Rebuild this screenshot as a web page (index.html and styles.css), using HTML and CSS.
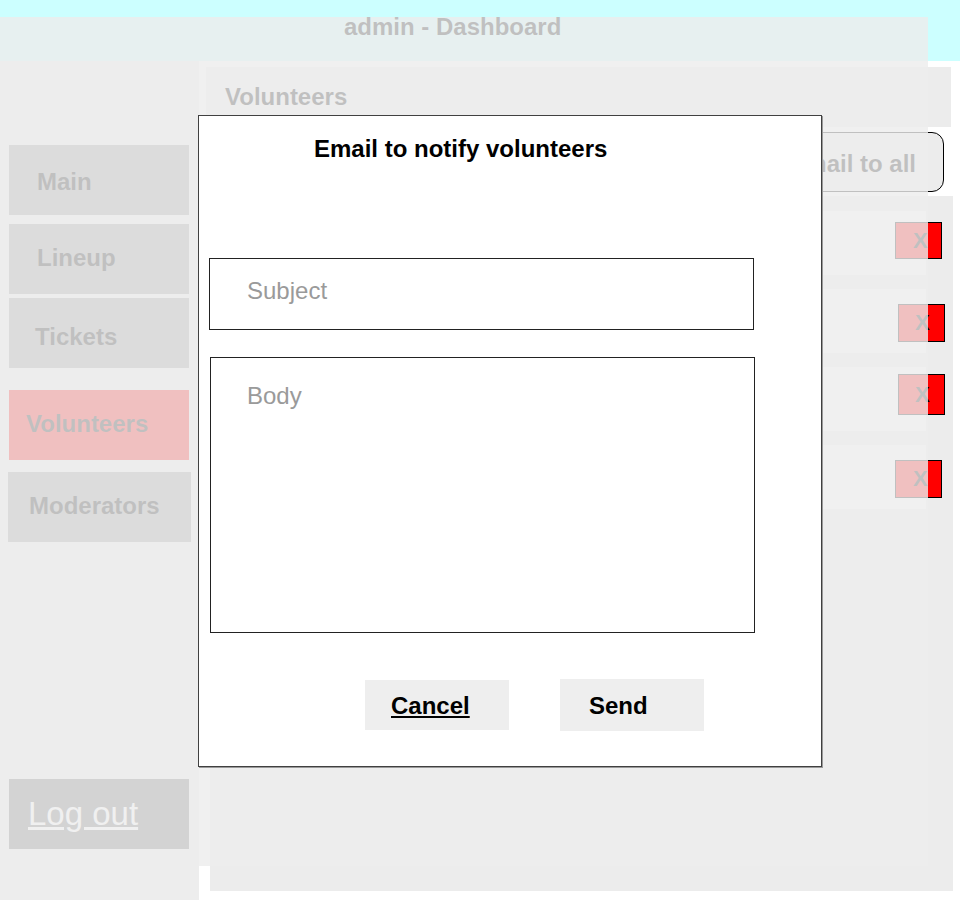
FILE: index.html
```html
<!DOCTYPE html>
<html lang="en">
<head>
<meta charset="utf-8">
<title>admin - Dashboard</title>
<link rel="stylesheet" href="styles.css">
</head>
<body>
<div class="app">
  <header class="topbar"><h1 class="topbar-title">admin - Dashboard</h1></header>
  <div class="layout">
    <nav class="sidebar">
      <a class="nav-item nav-main">Main</a>
      <a class="nav-item nav-lineup">Lineup</a>
      <a class="nav-item nav-tickets">Tickets</a>
      <a class="nav-item nav-volunteers">Volunteers</a>
      <a class="nav-item nav-moderators">Moderators</a>
      <a class="nav-item nav-logout" href="#">Log out</a>
    </nav>
    <main class="main">
      <div class="section-head">Volunteers</div>
      <div class="actions"><button class="btn-email">Email to all</button></div>
      <div class="list">
        <div class="row"><button class="btn-x x-a">X</button></div>
        <div class="row"><button class="btn-x x-b">X</button></div>
        <div class="row"><button class="btn-x x-c">X</button></div>
        <div class="row"><button class="btn-x x-d">X</button></div>
      </div>
    </main>
  </div>
  <div class="backdrop"></div>
  <div class="modal">
    <h2 class="modal-title">Email to notify volunteers</h2>
    <input class="field field-subject" type="text" placeholder="Subject">
    <textarea class="field field-body" placeholder="Body"></textarea>
    <div class="modal-actions">
      <button class="modal-btn btn-cancel">Cancel</button>
      <button class="modal-btn btn-send">Send</button>
    </div>
  </div>
</div>
</body>
</html>
```

FILE: styles.css
```css
* { box-sizing: border-box; }

html, body {
  margin: 0;
  height: 900px;
  overflow: hidden;
}

body {
  font-family: "Liberation Sans", Arial, sans-serif;
  background: #fff;
  color: #000;
}

.app {
  position: relative;
  width: 960px;
  height: 900px;
}

.topbar {
  height: 61px;
  background: #ccffff;
}

.topbar-title {
  margin: 0;
  padding: 13px 0 0 344px;
  font-size: 24px;
  line-height: 28px;
  font-weight: bold;
}

.layout {
  display: flex;
  width: 928px;
}

.sidebar {
  flex-shrink: 0;
  width: 199px;
  height: 839px;
  background: #ededed;
  display: flex;
  flex-direction: column;
  align-items: flex-start;
  padding-top: 84px;
}

.nav-item {
  display: flex;
  align-items: center;
  width: 180px;
  height: 70px;
  margin-left: 9px;
  background: #939393;
  color: #000;
  font-size: 24px;
  font-weight: bold;
  text-decoration: none;
}

.nav-main { padding: 4px 0 0 28px; }
.nav-lineup { margin-top: 9px; padding: 0 0 2px 28px; }
.nav-tickets { margin-top: 4px; padding: 8px 0 0 26px; }
.nav-volunteers { margin-top: 22px; padding: 0 0 2px 17px; background: #ff0000; }
.nav-moderators { margin-top: 12px; margin-left: 8px; width: 183px; padding: 0 0 2px 21px; }

.nav-logout {
  margin-top: 237px;
  padding-left: 19px;
  background: #666;
  color: #fff;
  font-weight: normal;
  font-size: 33px;
  text-decoration: underline;
}

.main {
  flex-shrink: 0;
  width: 729px;
}

.section-head {
  margin: 6px 0 0 7px;
  width: 745px;
  height: 60px;
  background: #ececec;
  display: flex;
  align-items: center;
  padding-left: 19px;
  font-size: 24px;
  font-weight: bold;
}

.actions {
  margin: 5px 0 0 7px;
  width: 738px;
  display: flex;
  justify-content: flex-end;
}

.btn-email {
  height: 60px;
  padding: 4px 27px 0;
  background: #ececec;
  border: 1px solid #000;
  border-radius: 12px;
  font-family: inherit;
  font-size: 24px;
  font-weight: bold;
  color: #000;
}

.list {
  margin: 4px 0 0 11px;
  width: 743px;
  height: 695px;
  background: #ececec;
  padding: 15px 0 0 10px;
  display: flex;
  flex-direction: column;
  gap: 14px;
}

.row {
  width: 706px;
  height: 64px;
  background: #fff;
  display: flex;
  justify-content: flex-end;
  align-items: flex-start;
}

.btn-x {
  width: 47px;
  background: #ff0000;
  border: 1px solid #000;
  padding: 0 0 0 17px;
  text-align: left;
  font-family: inherit;
  font-size: 22px;
  font-weight: bold;
  color: #000;
}

.x-a { margin-top: 11px; height: 37px; margin-right: -16px; }
.x-b { margin-top: 15px; height: 38px; margin-right: -19px; padding-left: 16px; }
.x-c { margin-top: 7px; height: 41px; margin-right: -19px; padding-left: 16px; }
.x-d { margin-top: 15px; height: 38px; margin-right: -16px; }

.backdrop {
  position: absolute;
  left: 0;
  top: 17px;
  width: 928px;
  height: 849px;
  background: rgba(236, 236, 236, 0.81);
}

.modal {
  position: absolute;
  left: 198px;
  top: 115px;
  width: 624px;
  height: 652px;
  background: #fff;
  border: 1px solid #404040;
  box-shadow: 1px 1px 0 #9a9a9a;
  padding-top: 19px;
  display: flex;
  flex-direction: column;
  align-items: flex-start;
}

.modal-title {
  margin: 0 0 0 115px;
  font-size: 24px;
  line-height: 28px;
  font-weight: bold;
}

.field {
  display: block;
  border: 1px solid #222;
  background: #fff;
  font-family: inherit;
  font-size: 24px;
  color: #000;
  outline: none;
}

.field::placeholder {
  color: #9a9a9a;
  opacity: 1;
}

.field-subject {
  margin: 95px 0 0 10px;
  width: 545px;
  height: 72px;
  padding: 0 37px 6px;
}

.field-body {
  margin: 27px 0 0 11px;
  width: 545px;
  height: 276px;
  padding: 24px 36px 0;
  resize: none;
  line-height: normal;
}

.modal-actions {
  margin-top: 46px;
  height: 52px;
  padding-left: 166px;
  display: flex;
  align-items: center;
}

.modal-btn {
  width: 144px;
  border: none;
  background: #eee;
  text-align: left;
  font-family: inherit;
  font-size: 24px;
  font-weight: bold;
  color: #000;
}

.btn-cancel {
  height: 50px;
  padding: 2px 0 0 26px;
  text-decoration: underline;
}

.btn-send {
  height: 52px;
  margin-left: 51px;
  padding: 2px 0 0 29px;
}
```
